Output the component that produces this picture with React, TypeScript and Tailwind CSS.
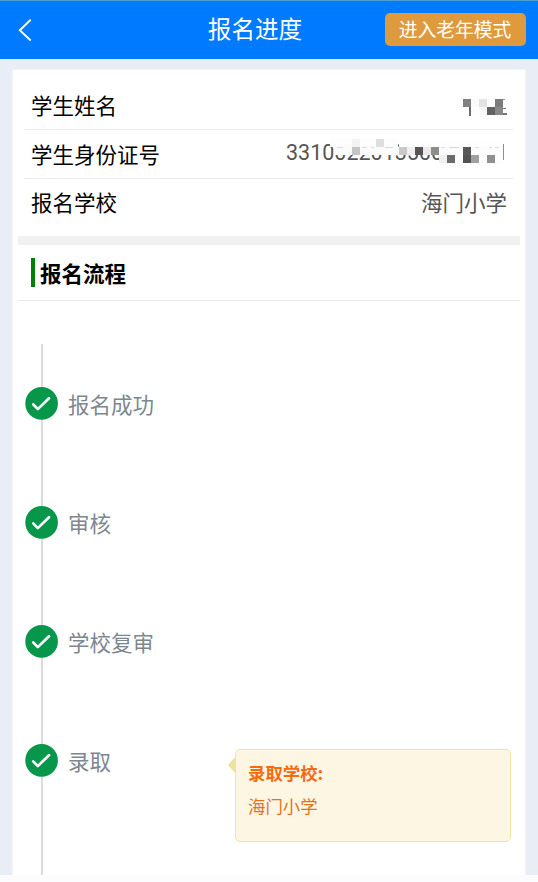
import type { ReactNode } from 'react'

interface Step {
  label: string
  school?: string
}

const steps: Step[] = [
  { label: '报名成功' },
  { label: '审核' },
  { label: '学校复审' },
  { label: '录取', school: '海门小学' },
]

// [x, y, w, h, fill] - pixelated cover over the private part of a value
type Tile = [number, number, number, number, string]

const nameTiles: Tile[] = [
  [0, 0, 8, 8, '#808080'],
  [8, 0, 8, 8, '#fbfbfb'],
  [16, 0, 8, 8, '#e3e3e3'],
  [32, 0, 8, 8, '#7b7b7b'],
  [40, 0, 2, 1, '#999999'],
  [6, 8, 2, 9, '#6a6a6a'],
  [16, 8, 8, 8, '#fafafa'],
  [24, 8, 8, 8, '#626262'],
  [32, 8, 8, 8, '#888888'],
  [40, 9, 3, 1, '#777777'],
  [40, 14, 4, 2, '#777777'],
]

const idTiles: Tile[] = [
  [43, 0, 68, 8, '#fdfdfd'],
  [48, 8, 64, 8, '#fbfbfb'],
  [112, 0, 104, 8, '#fefefe'],
  [112, 8, 104, 8, '#fcfcfc'],
  [152, 16, 64, 9, '#fdfdfd'],
  [50, 8, 6, 1, '#dddddd'],
  [75, 8, 5, 1, '#d8d8d8'],
  [84, 8, 3, 1, '#dddddd'],
  [98, 8, 8, 1, '#d8d8d8'],
  [154, 8, 4, 1, '#dddddd'],
  [162, 8, 10, 1, '#d8d8d8'],
  [188, 8, 4, 1, '#dddddd'],
  [202, 8, 3, 1, '#d8d8d8'],
  [208, 8, 4, 1, '#dddddd'],
  [65, 0, 8, 8, '#f3f3f3'],
  [65, 8, 8, 8, '#c4c4c4'],
  [89, 0, 8, 8, '#dedede'],
  [112, 8, 8, 8, '#c9c9c9'],
  [120, 8, 8, 8, '#f0f0f0'],
  [128, 8, 8, 8, '#555555'],
  [136, 8, 8, 8, '#e9e9e9'],
  [144, 8, 8, 8, '#8d8d8d'],
  [152, 16, 8, 8, '#f0f0f0'],
  [160, 16, 8, 8, '#6b6b6b'],
  [176, 8, 8, 8, '#585858'],
  [176, 16, 8, 8, '#525252'],
  [184, 16, 8, 8, '#a0a0a0'],
  [200, 16, 8, 8, '#909090'],
  [216, 5, 1, 16, '#8f8f8f'],
]

function Mosaic({ tiles, className }: { tiles: Tile[]; className: string }) {
  return (
    <svg className={className} shapeRendering="crispEdges">
      {tiles.map(([x, y, w, h, fill], i) => (
        <rect key={i} x={x} y={y} width={w} height={h} fill={fill} />
      ))}
    </svg>
  )
}

function InfoRow({ label, last, children }: { label: string; last?: boolean; children: ReactNode }) {
  return (
    <div className={`ml-[11px] mr-[12px] flex items-center justify-between pl-[7px] pr-[6px] ${last ? 'h-[46px]' : 'h-[49px] border-b border-[#ebebeb]'}`}>
      <span className="text-black">{label}</span>
      {children}
    </div>
  )
}

function CheckIcon() {
  return (
    <svg className="-ml-[18px] size-[33px] shrink-0" viewBox="0 0 33 33" fill="none">
      <circle cx="16.6" cy="16.4" r="16.3" fill="#06974a" />
      <path d="M8.2 17.4l4.6 4.7L24 11.2" stroke="#fff" strokeWidth="2.7" strokeLinecap="round" strokeLinejoin="round" />
    </svg>
  )
}

export default function App() {
  return (
    <div className="flex h-[882px] w-[538px] flex-col overflow-hidden bg-[#fcfcff] font-['Noto_Sans_CJK_SC','Noto_Sans',sans-serif]">
      {/* Header */}
      <header className="grid h-[59px] shrink-0 grid-cols-[153px_1fr_153px] items-center border-t border-[#4fa0d0] bg-[#007aff] text-white">
        <svg className="ml-[18px] size-[24px]" viewBox="0 0 24 24" fill="none" stroke="#fff" strokeWidth="1.9">
          <path d="M12.7 1.7L1.8 12.2l10.9 10.3" />
        </svg>
        <h1 className="-mt-[2px] pr-[28px] text-center text-[23.6px] leading-none">报名进度</h1>
        <button className="-mt-[2px] h-[33px] w-[141px] rounded-[5px] bg-[#df9a3d] pr-[1px] text-[18.8px] leading-none">进入老年模式</button>
      </header>

      <main className="h-[816px] shrink-0 bg-[#e8edf6] px-[12px] pt-[10px]">
        <div className="h-full border-x border-t border-[#f2f4f8] bg-white text-[21.5px] leading-none">
          {/* Student info */}
          <div className="h-[166px] pt-[11px]">
            <InfoRow label="学生姓名">
              <Mosaic tiles={nameTiles} className="-mr-[1px] mt-[5px] h-[18px] w-[45px]" />
            </InfoRow>
            <InfoRow label="学生身份证号">
              <div className="relative -mt-[3px] w-[221px] font-['Roboto','Noto_Sans_CJK_SC',sans-serif] text-[#555]">
                3310022013500
                <Mosaic tiles={idTiles} className="absolute -top-[3px] left-px h-[26px] w-[221px]" />
              </div>
            </InfoRow>
            <InfoRow label="报名学校" last>
              <span className="text-[#555]">海门小学</span>
            </InfoRow>
          </div>
          <div className="mx-[5px] h-[9px] bg-[#f1f1f1]" />

          {/* Progress */}
          <div className="mx-[5px] flex h-[56px] items-center border-b border-[#ebebeb] pl-[13px]">
            <h2 className="flex h-[29px] items-center border-l-4 border-[#008000] pl-[5px] font-bold text-black">报名流程</h2>
          </div>
          <div className="ml-[28px] mt-[43px] h-[531px] border-l-2 border-[#dcdcdc]">
            {steps.map(step => (
              <div key={step.label} className="flex h-[119px] items-center text-[#7d8790]">
                <CheckIcon />
                <span className="ml-[10px] w-[167px] shrink-0">{step.label}</span>
                {step.school && (
                  <div className="relative mt-[48px] h-[93px] w-[276px] shrink-0 self-start rounded-[5px] border-[1.5px] border-[#f0e6a4] bg-[#fdf6e3] pl-[12px] pt-[14px] text-[17.4px]">
                    <span className="absolute -left-[8px] top-[6px] border-y-[9px] border-r-8 border-y-transparent border-r-[#ede39b]" />
                    <p className="font-bold text-[#f56b0d]">录取学校:</p>
                    <p className="mt-[16px] text-[#e0731f]">{step.school}</p>
                  </div>
                )}
              </div>
            ))}
          </div>
        </div>
      </main>
    </div>
  )
}
